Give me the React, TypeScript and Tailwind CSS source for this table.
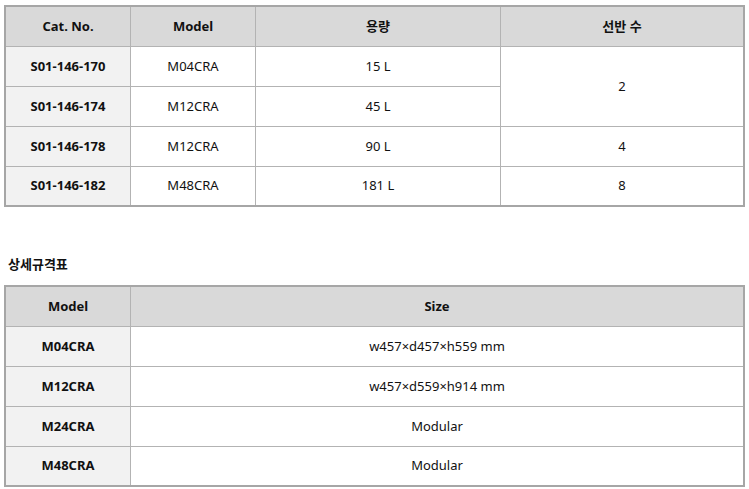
const specRows = [
  { cat: 'S01-146-170', model: 'M04CRA', vol: '15 L' },
  { cat: 'S01-146-174', model: 'M12CRA', vol: '45 L' },
  { cat: 'S01-146-178', model: 'M12CRA', vol: '90 L' },
  { cat: 'S01-146-182', model: 'M48CRA', vol: '181 L' },
];

const sizeRows = [
  { model: 'M04CRA', size: 'w457×d457×h559 mm' },
  { model: 'M12CRA', size: 'w457×d559×h914 mm' },
  { model: 'M24CRA', size: 'Modular' },
  { model: 'M48CRA', size: 'Modular' },
];

const font = { fontFamily: '"Noto Sans", "Noto Sans CJK KR", sans-serif' };

function Cell({
  children,
  head,
  first,
  last,
  right,
  className = '',
}: {
  children: React.ReactNode;
  head?: boolean;
  first?: boolean;
  last?: boolean;
  right?: boolean;
  className?: string;
}) {
  return (
    <div
      className={[
        'flex items-center justify-center text-[13px] text-[#111]',
        last ? 'h-[38px]' : 'h-[40px] border-b border-[#b3b3b3]',
        right ? '' : 'border-r border-[#b3b3b3]',
        head ? 'bg-[#d9d9d9] font-bold' : first ? 'bg-[#f2f2f2] font-bold' : 'bg-white',
        className,
      ].join(' ')}
    >
      {children}
    </div>
  );
}

export default function App() {
  return (
    <div className="w-[749px] h-[489px] bg-white pl-[4px] pt-[5px]" style={font}>
      <div className="w-[741px] border-2 border-[#a6a6a6] grid grid-cols-[125px_125px_245px_1fr]">
        <Cell head>Cat. No.</Cell>
        <Cell head>Model</Cell>
        <Cell head>용량</Cell>
        <Cell head right>선반 수</Cell>

        <Cell first>{specRows[0].cat}</Cell>
        <Cell>{specRows[0].model}</Cell>
        <Cell>{specRows[0].vol}</Cell>
        <div className="row-span-2 flex items-center justify-center text-[13px] text-[#111] border-b border-[#b3b3b3]">
          2
        </div>

        <Cell first>{specRows[1].cat}</Cell>
        <Cell>{specRows[1].model}</Cell>
        <Cell>{specRows[1].vol}</Cell>

        <Cell first>{specRows[2].cat}</Cell>
        <Cell>{specRows[2].model}</Cell>
        <Cell>{specRows[2].vol}</Cell>
        <Cell right>4</Cell>

        <Cell first last>{specRows[3].cat}</Cell>
        <Cell last>{specRows[3].model}</Cell>
        <Cell last>{specRows[3].vol}</Cell>
        <Cell last right>8</Cell>
      </div>

      <div className="h-[78px] flex items-center pl-[4px] pt-[37px] text-[13px] font-bold text-[#111]">
        상세규격표
      </div>

      <div className="w-[741px] border-2 border-[#a6a6a6] grid grid-cols-[125px_1fr]">
        <Cell head>Model</Cell>
        <Cell head right>Size</Cell>
        {sizeRows.map((r, i) => {
          const last = i === sizeRows.length - 1;
          return (
            <div key={r.model} className="contents">
              <Cell first last={last}>{r.model}</Cell>
              <Cell last={last} right>{r.size}</Cell>
            </div>
          );
        })}
      </div>
    </div>
  );
}
